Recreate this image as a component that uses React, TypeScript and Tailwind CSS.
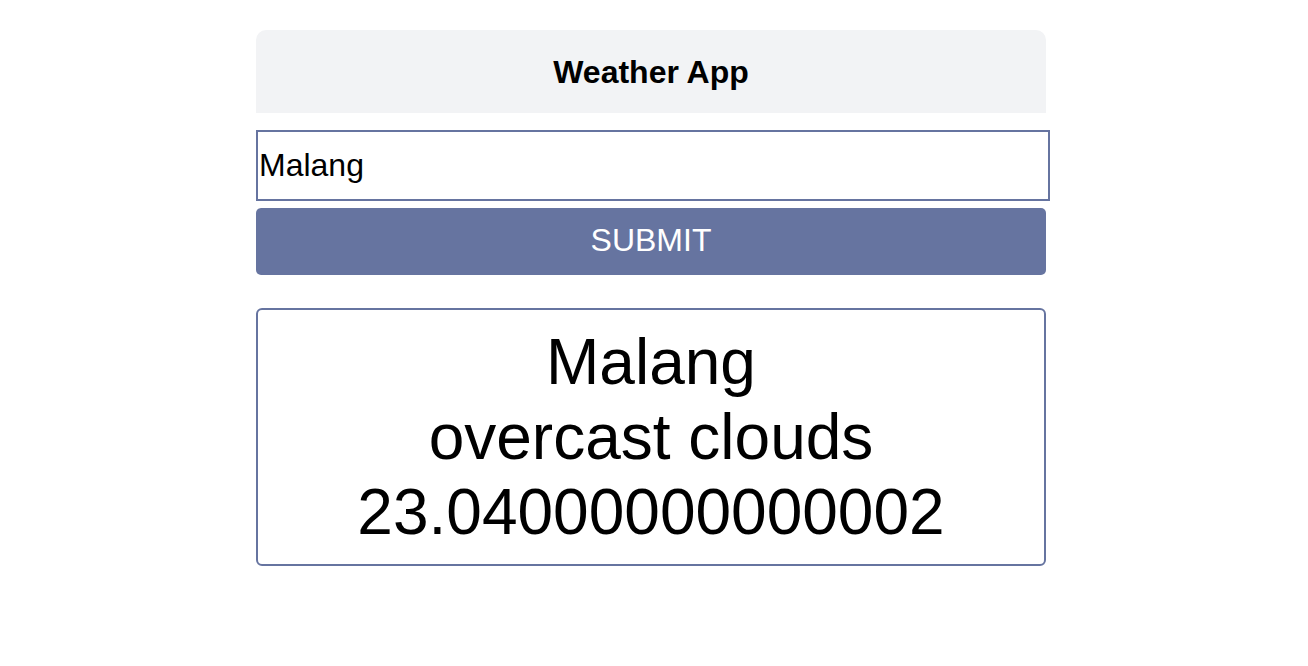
import { useState } from 'react'

const font = { fontFamily: '"Liberation Sans", Arial, sans-serif' }

const WeatherResult = ({ city, desc, temp }: { city: string; desc: string; temp: string }) => (
  <div className="mt-[33px] w-[790px] rounded-[6px] border-2 border-[#6674a0] pt-[15px] pb-[14px] text-center text-[64px] leading-[75px] text-black">
    <div>{city}</div>
    <div>{desc}</div>
    <div>{temp}</div>
  </div>
)

const App = () => {
  const [city, setCity] = useState('Malang')
  return (
    <div className="min-h-[666px] bg-white pt-[30px] pl-[256px]" style={font}>
      <div className="flex h-[83px] w-[790px] items-center justify-center rounded-t-[10px] bg-[#f2f3f5]">
        <h1 className="text-[32px] font-bold text-black">Weather App</h1>
      </div>
      <input
        value={city}
        onChange={(e) => setCity(e.target.value)}
        className="mt-[17px] block h-[71px] w-[794px] border-2 border-[#6674a0] px-[1px] text-[32px] text-black outline-none"
      />
      <button className="mt-[7px] block h-[67px] w-[790px] rounded-[5px] bg-[#6674a0] pb-[4px] text-[32px] text-white">
        SUBMIT
      </button>
      <WeatherResult city="Malang" desc="overcast clouds" temp="23.04000000000002" />
    </div>
  )
}

export default App
